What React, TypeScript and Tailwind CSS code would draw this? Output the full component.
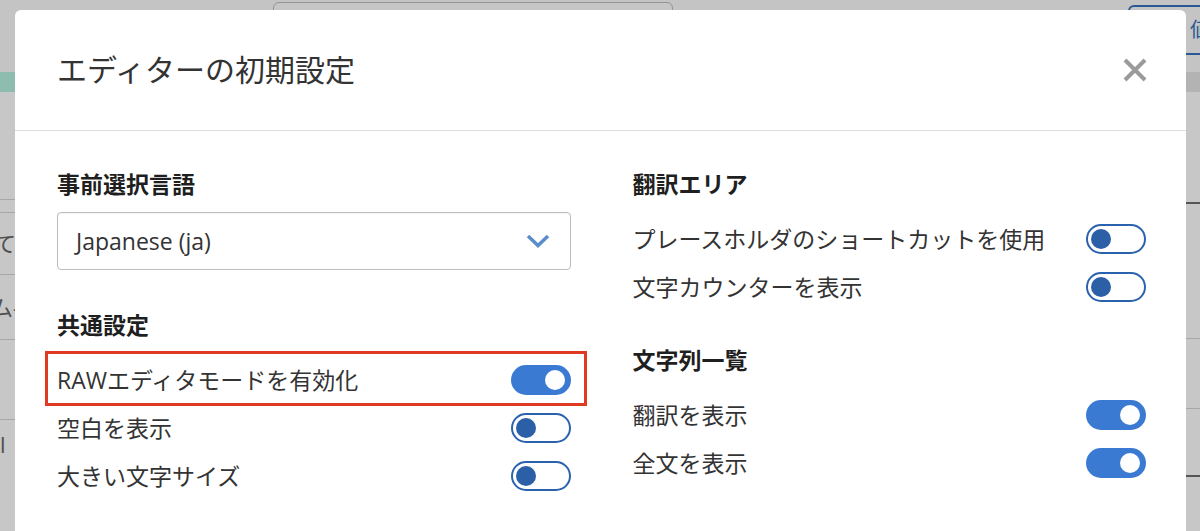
function Toggle({ on }: { on: boolean }) {
  if (on) {
    return (
      <span className="flex h-[30px] w-[60px] shrink-0 items-center justify-end rounded-full bg-[#3a7ad2] px-[6px]">
        <span className="h-[20px] w-[20px] rounded-full bg-white" />
      </span>
    );
  }
  return (
    <span className="flex h-[30px] w-[60px] shrink-0 items-center rounded-full border-2 border-[#2a62ad] bg-white px-[3px]">
      <span className="h-[20px] w-[20px] rounded-full bg-[#2b5fa6]" />
    </span>
  );
}

function Row({ label, on }: { label: string; on: boolean }) {
  return (
    <div className="flex h-[48px] items-center justify-between">
      <span className="text-[23px] leading-[32px] text-[#333]">{label}</span>
      <Toggle on={on} />
    </div>
  );
}

function Heading({ children }: { children: string }) {
  return <h3 className="text-[23px] font-bold leading-[32px] text-[#1f1f1f]">{children}</h3>;
}

function BackgroundPage() {
  return (
    <div className="flex h-full flex-col bg-white text-[#666]">
      <div className="flex h-[72px] items-start bg-[#fbfbfb]">
        <div className="ml-[273px] mt-[2px] h-[40px] w-[400px] rounded-[6px] border border-[#bdbdbd] bg-[#fefefe]" />
        <div className="ml-auto mt-[5px] flex h-[50px] w-[72px] items-center overflow-hidden whitespace-nowrap rounded-l-[6px] border-2 border-r-0 border-[#3774bf] pl-[60px] text-[20px] text-[#3774bf]">
          値
        </div>
      </div>
      <div className="flex h-[20px]">
        <div className="w-[20px] bg-[#b7f3e0]" />
        <div className="flex-1 bg-white" />
        <div className="w-[20px] bg-[#e6e6e6]" />
      </div>
      <div className="flex flex-1 justify-between">
        <div className="flex w-[20px] flex-col">
          <div className="h-[108px] border-b border-[#d6d6d6]" />
          <div className="h-[13px] border-b border-[#d6d6d6]" />
          <div className="flex h-[62px] items-center justify-end overflow-hidden whitespace-nowrap border-b border-[#d6d6d6] pr-[4px] text-[22px]">
            すて
          </div>
          <div className="flex h-[65px] items-center justify-end overflow-hidden whitespace-nowrap border-b border-[#d6d6d6] text-[22px]">
            ーム-
          </div>
          <div className="h-[80px] border-b border-[#d6d6d6]" />
          <div className="pt-[8px] text-[22px]">l</div>
        </div>
        <div className="flex w-[20px] flex-col">
          <div className="h-[112px] border-b-2 border-[#6d6d6d]" />
          <div className="h-[135px] border-b border-[#d6d6d6]" />
          <div className="h-[70px] border-b border-[#d6d6d6]" />
          <div className="h-[68px] border-b-2 border-[#6d6d6d]" />
          <div className="pt-[10px] font-['Liberation_Serif',serif] text-[22px] italic">ι</div>
        </div>
      </div>
    </div>
  );
}

export default function App() {
  return (
    <div className="relative h-[531px] w-[1200px] overflow-hidden font-['Open_Sans','Noto_Sans_CJK_JP',sans-serif]">
      <BackgroundPage />
      <div className="absolute inset-0 bg-black/[0.22]" />
      <div className="absolute left-[15px] top-[10px] h-[560px] w-[1171px] rounded-[6px] bg-white">
        <div className="flex h-[121px] items-center justify-between border-b border-[#dcdde0] pl-[42px] pr-[40px]">
          <h2 className="text-[30px] leading-[40px] text-[#333]">エディターの初期設定</h2>
          <svg width="24" height="24" viewBox="0 0 24 24" className="mr-[-1px]">
            <path d="M2 2L22 22M22 2L2 22" stroke="#9b9b9b" strokeWidth="4" />
          </svg>
        </div>
        <div className="grid grid-cols-2 gap-[62px] pl-[42px] pr-[40px] pt-[37px]">
          <div className="flex flex-col">
            <Heading>事前選択言語</Heading>
            <div className="mt-[12px] flex h-[58px] items-center justify-between rounded-[4px] border border-[#bcbcbc] pl-[18px] pr-[20px] shadow-[inset_0_1px_1px_rgba(0,0,0,0.04)]">
              <span className="text-[23px] text-[#333]">Japanese (ja)</span>
              <svg width="24" height="14" viewBox="0 0 24 14">
                <path d="M2 2L12 11.5L22 2" fill="none" stroke="#5b8dcd" strokeWidth="3.5" />
              </svg>
            </div>
            <div className="mt-[39px]">
              <Heading>共通設定</Heading>
            </div>
            <div className="relative mt-[15px]">
              <span className="pointer-events-none absolute -bottom-[2px] -left-[12px] -right-[16px] -top-[5px] border-[3px] border-[#e03a22]" />
              <Row label="RAWエディタモードを有効化" on />
            </div>
            <Row label="空白を表示" on={false} />
            <Row label="大きい文字サイズ" on={false} />
          </div>
          <div className="flex flex-col">
            <Heading>翻訳エリア</Heading>
            <div className="mt-[15px]">
              <Row label="プレースホルダのショートカットを使用" on={false} />
              <Row label="文字カウンターを表示" on={false} />
            </div>
            <div className="mt-[33px]">
              <Heading>文字列一覧</Heading>
            </div>
            <div className="mt-[15px]">
              <Row label="翻訳を表示" on />
              <Row label="全文を表示" on />
            </div>
          </div>
        </div>
      </div>
    </div>
  );
}
